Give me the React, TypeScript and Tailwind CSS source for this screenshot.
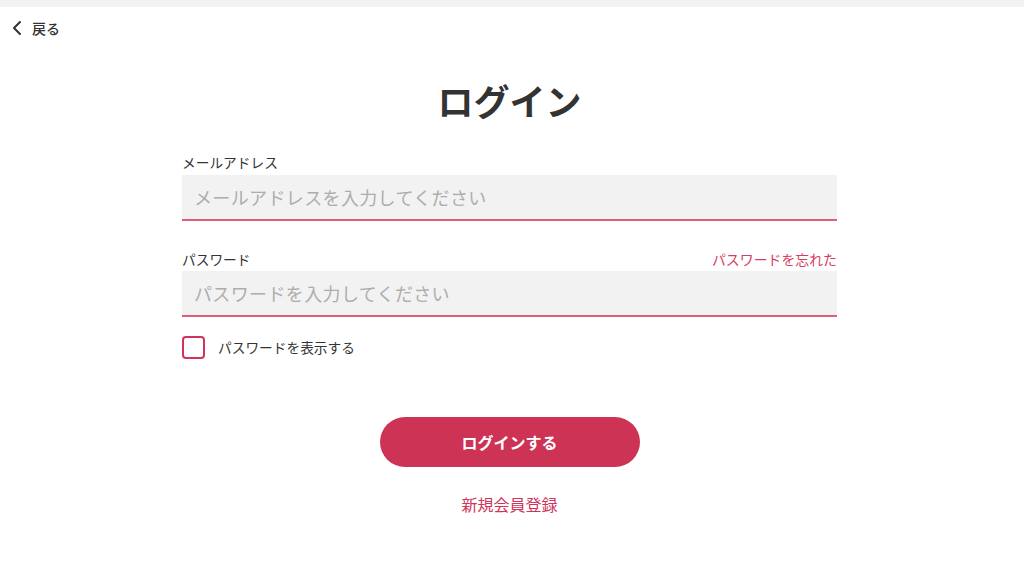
import React, { useState } from "react";

const font = { fontFamily: '"Noto Sans CJK JP", "Noto Sans", sans-serif' };

export default function App() {
  const [show, setShow] = useState(false);

  return (
    <div className="min-h-[586px] w-full bg-white text-[#333]" style={font}>
      <div className="h-[7px] bg-[#f2f2f2]" />

      {/* Back */}
      <div className="flex h-[42px] items-center pl-[11px]">
        <button className="flex items-center gap-[9px] text-[14px] font-medium text-[#333]">
          <svg width="12" height="16" viewBox="0 0 12 16" fill="none">
            <path d="M9 2L3 8l6 6" stroke="#333" strokeWidth="2" strokeLinecap="round" strokeLinejoin="round" />
          </svg>
          戻る
        </button>
      </div>

      <div className="pr-[5px]">
        <div className="mx-auto w-[655px]">
          <h1 className="mt-[26px] text-center text-[36px] font-bold leading-[50px] text-[#333]">ログイン</h1>

          {/* Email */}
          <div className="mt-[27px]">
            <label className="block text-[13.7px] leading-[20px] text-[#333]">メールアドレス</label>
            <input
              placeholder="メールアドレスを入力してください"
              className="mt-[3px] h-[46px] w-full border-0 border-b-2 border-solid border-b-[#dc5f7a] bg-[#f2f2f2] px-[12px] text-[18px] tracking-[0.02em] outline-none placeholder:text-[#adadad]"
            />
          </div>

          {/* Password */}
          <div className="mt-[28px]">
            <div className="flex items-end justify-between">
              <label className="block text-[13.7px] leading-[20px] text-[#333]">パスワード</label>
              <a className="text-[13.9px] leading-[20px] text-[#d63d60]">パスワードを忘れた</a>
            </div>
            <input
              type={show ? "text" : "password"}
              placeholder="パスワードを入力してください"
              className="mt-[2px] h-[46px] w-full border-0 border-b-2 border-solid border-b-[#dc5f7a] bg-[#f2f2f2] px-[12px] text-[18px] tracking-[0.02em] outline-none placeholder:text-[#adadad]"
            />
          </div>

          {/* Show password */}
          <label className="mt-[19px] flex items-center gap-[13px]">
            <span
              onClick={() => setShow(!show)}
              className="block h-[23px] w-[23px] rounded-[4px] border-2 border-solid border-[#d0345a] bg-white"
            />
            <span className="text-[13.7px] text-[#333]">パスワードを表示する</span>
          </label>

          <div className="mt-[58px] flex justify-center">
            <button className="h-[50px] w-[260px] rounded-full bg-[#cd3355] text-[16px] font-bold text-white">
              ログインする
            </button>
          </div>

          <div className="mt-[25px] text-center">
            <a className="text-[16px] text-[#d0345a]">新規会員登録</a>
          </div>
        </div>
      </div>
    </div>
  );
}
